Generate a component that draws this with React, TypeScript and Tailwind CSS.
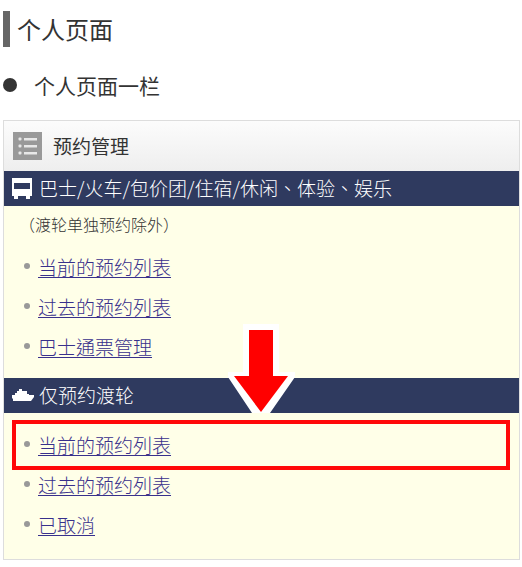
type LinkItem = {
  label: string;
  highlighted?: boolean;
};

const allBookings: LinkItem[] = [
  { label: "当前的预约列表" },
  { label: "过去的预约列表" },
  { label: "巴士通票管理" },
];

const ferryBookings: LinkItem[] = [
  { label: "当前的预约列表", highlighted: true },
  { label: "过去的预约列表" },
  { label: "已取消" },
];

const ListIcon = () => (
  <svg viewBox="0 0 29 28" className="w-[29px] h-7" aria-hidden="true">
    <rect width="29" height="28" fill="#999" />
    <g fill="#e8e8e8">
      <rect x="5.5" y="5.5" width="3" height="3" rx="1" />
      <rect x="5.5" y="12.5" width="3" height="3" rx="1" />
      <rect x="5.5" y="19.5" width="3" height="3" rx="1" />
      <rect x="11" y="6" width="13" height="2.5" />
      <rect x="11" y="13" width="13" height="2.5" />
      <rect x="11" y="20" width="13" height="2.5" />
    </g>
  </svg>
);

const BusIcon = () => (
  <svg viewBox="0 0 22 22" className="w-[22px] h-[22px]" aria-hidden="true">
    <path
      fill="#fff"
      fillRule="evenodd"
      d="M0 0h20v18h-2v3h-4v-3H6v3H2v-3H0zM2 5v6h16V5z"
    />
  </svg>
);

const ShipIcon = () => (
  <svg viewBox="0 0 22 22" className="w-[22px] h-[22px]" aria-hidden="true">
    <path
      fill="#fff"
      d="M5 6h2V4h3v2h5v3h2v1h5v2l-3 4H1v-2l-1-1v-3h3V8h2z"
    />
  </svg>
);

// Flecha roja con contorno blanco
const Arrow = () => (
  <svg
    viewBox="0 0 68 92"
    className="absolute left-1/2 -translate-x-1/2 bottom-0 w-[68px] h-[92px]"
    aria-hidden="true"
  >
    <path fill="#fff" d="M15 3h36v48h16v5L42 92H24L0 56v-5h15z" />
    <path fill="#f00" d="M21 9h24v46h15L33 91 6 55h15z" />
  </svg>
);

const LinkList = ({ items }: { items: LinkItem[] }) => (
  <ul>
    {items.map((item) => (
      <li key={item.label} className="relative flex items-center h-10 pl-5">
        <span className="w-[6px] h-[6px] mr-2 mb-[2px] rounded-full bg-[#999]" />
        <a
          href="#"
          className="text-[19px] leading-6 font-light text-[#38308c] underline underline-offset-2 decoration-1"
        >
          {item.label}
        </a>
        {item.highlighted && (
          <span className="absolute -inset-y-[5px] left-2 right-[9px] border-4 border-[#ff0808] pointer-events-none" />
        )}
      </li>
    ))}
  </ul>
);

export default function App() {
  return (
    <main className="bg-white pt-[11px] pb-2 pl-[3px] pr-[2px] text-[#333] font-['Noto_Sans_CJK_TC','Noto_Sans_CJK_SC',sans-serif]">
      <h1 className="border-l-[7px] border-[#666] pl-[7px] text-2xl leading-9">
        个人页面
      </h1>
      <h2 className="flex items-center gap-[17px] mt-6 text-[21px] leading-7">
        <span className="w-[14px] h-[14px] rounded-full bg-[#333]" />
        个人页面一栏
      </h2>

      <section className="mt-[21px] border border-[#ddd] bg-[#ffffe8]">
        <h3 className="flex items-center gap-[11px] h-[50px] pl-[9px] bg-linear-to-b from-[#fcfcfc] to-[#eee] text-[19px]">
          <ListIcon />
          预约管理
        </h3>

        <h4 className="flex items-center gap-[5px] h-[35px] pl-2 bg-[#2f3a5f] text-white text-[19px] font-light">
          <BusIcon />
          巴士/火车/包价团/住宿/休闲、体验、娱乐
        </h4>
        <p className="pt-[6px] pl-[15px] text-base leading-6 font-light">
          （渡轮单独预约除外）
        </p>
        <div className="pt-[11px] pb-[11px]">
          <LinkList items={allBookings} />
        </div>

        <div className="relative">
          <h4 className="flex items-center gap-[5px] h-[35px] pl-2 bg-[#2f3a5f] text-white text-[19px] font-light">
            <ShipIcon />
            仅预约渡轮
          </h4>
          <Arrow />
        </div>
        <div className="pt-3 pb-[14px]">
          <LinkList items={ferryBookings} />
        </div>
      </section>
    </main>
  );
}
